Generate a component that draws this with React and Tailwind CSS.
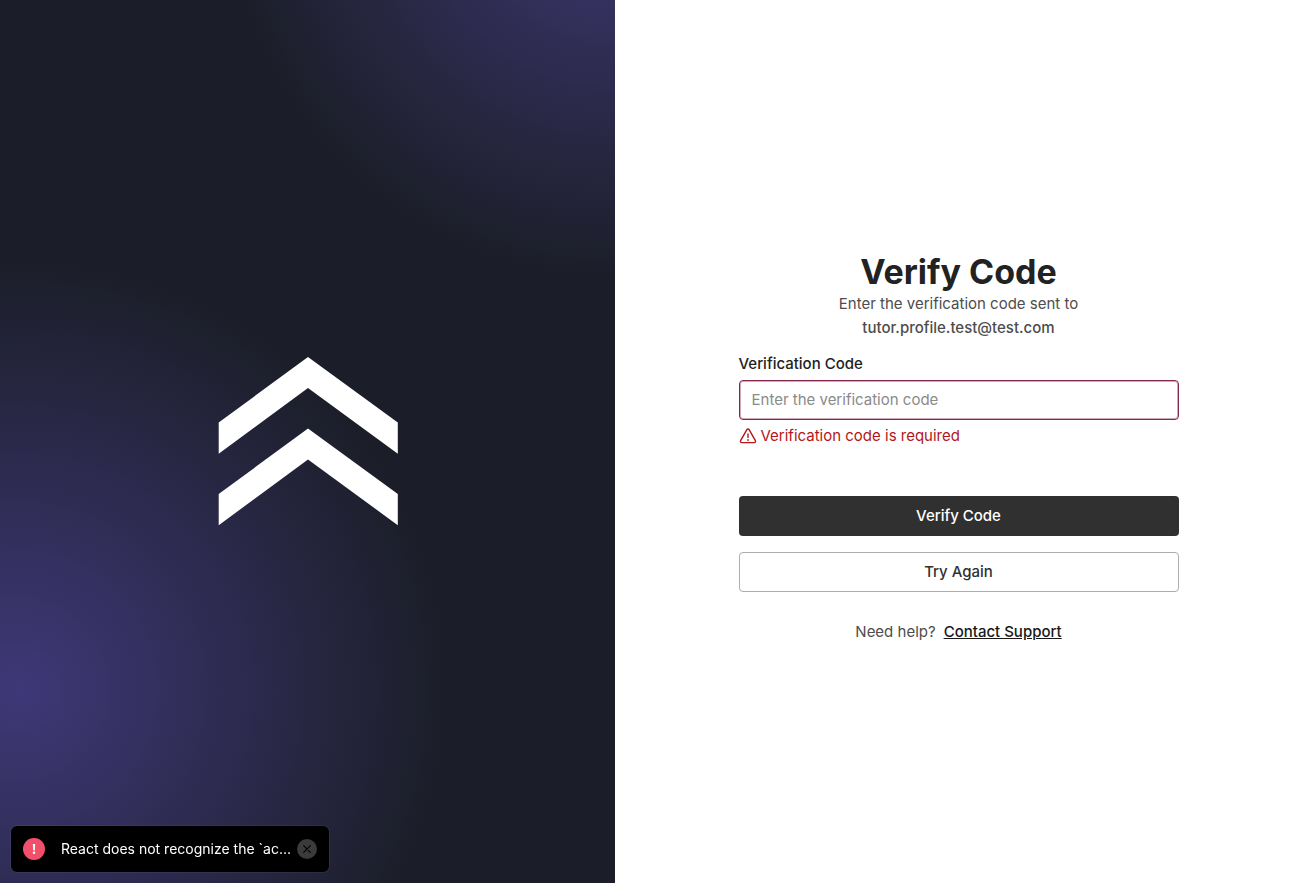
function Logo() {
  return (
    <svg className="w-45 h-auto" viewBox="0 0 180 170" fill="#fff" role="img" aria-label="Logo">
      <path d="M0.7 65.5 90 0l89.8 65.5v31.2L90 31 0.7 96.7z" />
      <path d="M0.7 137 90 71.5l89.8 65.5v31.2L90 102.5 0.7 168.2z" />
    </svg>
  );
}

function WarningIcon() {
  return (
    <svg className="size-[18px] shrink-0" viewBox="0 0 18 18" fill="none" stroke="currentColor" strokeWidth="1.4" strokeLinecap="round" strokeLinejoin="round" aria-hidden="true">
      <path d="M7.9 2.6a1.25 1.25 0 0 1 2.2 0l6.3 11.1a1.25 1.25 0 0 1-1.1 1.9H2.7a1.25 1.25 0 0 1-1.1-1.9z" />
      <path d="M9 7v3.4" />
      <circle cx="9" cy="12.9" r="0.3" />
    </svg>
  );
}

function Toast() {
  return (
    <div role="alert" className="fixed bottom-[11px] left-[11px] flex h-[46px] items-center rounded-md bg-black px-3 text-white ring-1 ring-white/5">
      <svg className="size-[22px] shrink-0" viewBox="0 0 22 22" aria-hidden="true">
        <circle cx="11" cy="11" r="11" fill="#f2506a" />
        <path d="M9.8 6h2.4l-.4 6.4h-1.6z" fill="#fff" />
        <circle cx="11" cy="14.8" r="1.3" fill="#fff" />
      </svg>
      <p className="ml-4 text-sm whitespace-nowrap">React does not recognize the `ac...</p>
      <button type="button" aria-label="Dismiss" className="ml-1.5 flex size-5 shrink-0 items-center justify-center rounded-full bg-[#3b3b3b] text-black">
        <svg className="size-2" viewBox="0 0 8 8" stroke="currentColor" strokeWidth="1.1" strokeLinecap="round" aria-hidden="true">
          <path d="M0.7 0.7 7.3 7.3M7.3 0.7 0.7 7.3" />
        </svg>
      </button>
    </div>
  );
}

export default function App() {
  return (
    <div className="grid min-h-screen grid-cols-[615fr_687fr] bg-white font-['Inter',sans-serif] text-[15px] leading-6 text-[#222]">
      <aside className="flex items-center justify-center bg-[#1b1e28] bg-[radial-gradient(circle_430px_at_3%_78%,#3f3878,#1b1e2800),radial-gradient(circle_390px_at_100%_-110px,#3f3874,#1b1e2800)]">
        <Logo />
      </aside>
      <main className="flex flex-col items-center justify-center px-6 pt-3">
        <form noValidate className="flex w-full max-w-110 flex-col">
          <h1 className="text-center text-[34px] leading-10 font-bold">Verify Code</h1>
          <p className="text-center text-[#4d4d4d]">
            Enter the verification code sent to
            <strong className="block font-medium">tutor.profile.test@test.com</strong>
          </p>
          <label htmlFor="code" className="mt-3 font-medium">Verification Code</label>
          <input
            id="code"
            type="text"
            placeholder="Enter the verification code"
            aria-invalid="true"
            aria-describedby="code-error"
            className="mt-1 h-10 rounded border border-[#862850] px-3 ring-1 ring-[#862850]/40 ring-inset outline-none placeholder:text-[#8a8a8a]"
          />
          <p id="code-error" className="mt-1 flex items-center gap-1 text-[#b3161b]">
            <WarningIcon />
            Verification code is required
          </p>
          <button type="submit" className="mt-12 h-10 rounded bg-[#303030] font-medium text-white">Verify Code</button>
          <button type="button" className="mt-4 h-10 rounded border border-[#adadad] font-medium text-[#303030]">Try Again</button>
          <p className="mt-7 flex justify-center gap-2 text-[#4d4d4d]">
            Need help?
            <a href="#support" className="font-medium text-[#181818] underline">Contact Support</a>
          </p>
        </form>
      </main>
      <Toast />
    </div>
  );
}
